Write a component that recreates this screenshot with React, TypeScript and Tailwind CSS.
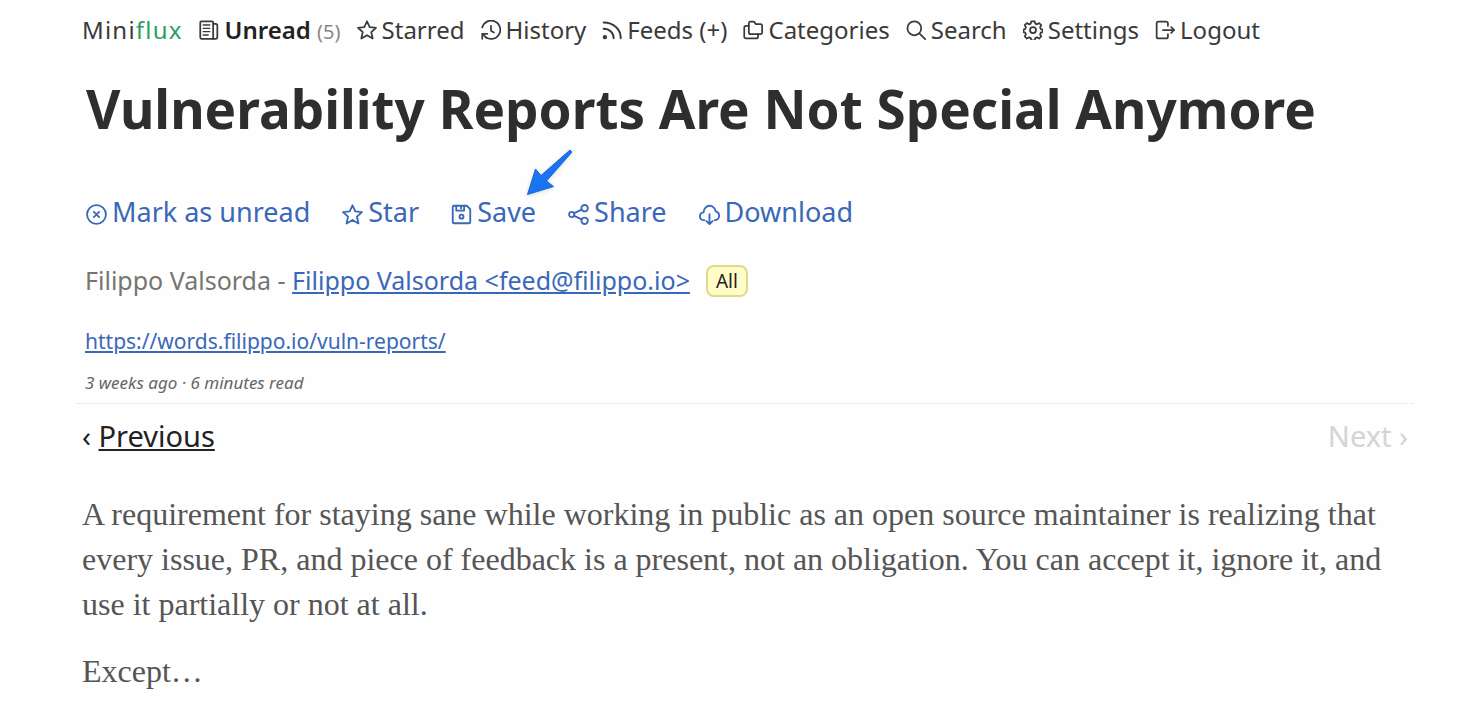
import type { ReactNode } from "react";

function Icon({ children, className }: { children: ReactNode; className: string }) {
  return (
    <svg
      viewBox="0 0 24 24"
      fill="none"
      stroke="currentColor"
      strokeWidth="2.1"
      strokeLinecap="round"
      strokeLinejoin="round"
      aria-hidden="true"
      className={className}
    >
      {children}
    </svg>
  );
}

const icons = {
  news: (
    <>
      <path d="M3 1.500h12.500A1.500 1.500 0 0 1 17 3v19.500H3A1.500 1.500 0 0 1 1.500 21V3A1.500 1.500 0 0 1 3 1.500z" />
      <path d="M17 4.500h3A2 2 0 0 1 22 6.500v14a2 2 0 0 1-2 2h-3" />
      <path d="M5 6h8M5 10h8M5 14h8M5 18h6" strokeWidth="1.6" />
    </>
  ),
  star: <path d="M12 1.500l3.200 7 7.600.8-5.700 5.200 1.700 7.700-6.800-4-6.800 4 1.700-7.700-5.700-5.200 7.600-.8z" />,
  history: (
    <>
      <path d="M1.500 9A11 11 0 1 1 5.500 20.500" />
      <path d="M1.500 22.500v-6h6M1.500 16.500l5 5" />
      <path d="M12 7v6l3.500 2" />
    </>
  ),
  feeds: (
    <>
      <circle cx="3.500" cy="20.500" r="1.600" fill="currentColor" />
      <path d="M2 10.500c7 0 12 5 12 11.500M2 3c12 0 20.500 8 20.500 19" strokeWidth="2.300" />
    </>
  ),
  folders: (
    <>
      <path d="M9 2h4l2.500 3H21a2 2 0 0 1 2 2v8a2 2 0 0 1-2 2H9a2 2 0 0 1-2-2V4a2 2 0 0 1 2-2z" />
      <path d="M18 17v3a2 2 0 0 1-2 2H3.500a2 2 0 0 1-2-2V9a2 2 0 0 1 2-2H7" />
    </>
  ),
  search: (
    <>
      <circle cx="10" cy="10" r="8.300" />
      <path d="M16 16l7 7" />
    </>
  ),
  settings: (
    <>
      <circle cx="12" cy="12" r="3.600" />
      <path d="M10 1.500h4l.7 2.800 2.200.9 2.500-1.500 2.500 2.500-1.400 2.500.9 2.200 2 .6v3l-2 .6-.9 2.200 1.400 2.500-2.500 2.500-2.500-1.500-2.200.9-.7 2.800h-4l-.7-2.800-2.200-.9-2.500 1.500-2.500-2.500 1.400-2.500-.9-2.200-2-.6v-3l2-.6.9-2.200-1.400-2.500 2.500-2.500 2.500 1.500 2.200-.9z" />
    </>
  ),
  logout: (
    <>
      <path d="M15.500 7V4a2 2 0 0 0-2-2H4a2 2 0 0 0-2 2v16a2 2 0 0 0 2 2h9.500a2 2 0 0 0 2-2v-3" />
      <path d="M9.500 12H23M19.500 8.500L23 12l-3.500 3.500" />
    </>
  ),
  circleX: (
    <>
      <circle cx="12" cy="12" r="10.800" />
      <path d="M9 9l6 6M15 9l-6 6" />
    </>
  ),
  floppy: (
    <>
      <path d="M3.500 2H18l4 4v14.500a1.500 1.500 0 0 1-1.500 1.500h-17A1.500 1.500 0 0 1 2 20.500v-17A1.500 1.500 0 0 1 3.500 2z" />
      <path d="M6 2v5.500h9V2M11.500 3v2" />
      <circle cx="12" cy="14.500" r="2.300" />
    </>
  ),
  share: (
    <>
      <circle cx="4.200" cy="12" r="3" />
      <circle cx="19" cy="4.800" r="3.700" />
      <circle cx="19" cy="19.200" r="3.700" />
      <path d="M7.200 10.500l8.300-4M7.200 13.500l8.300 4" />
    </>
  ),
  cloud: (
    <>
      <path d="M6 18.500h-.5C3 18.500 1 16.500 1 14c0-2.300 1.800-4.200 4.200-4.500C5.500 5.200 8.500 2 12 2s6.500 3 7 6.500c2.500.5 4 2.500 4 5 0 2.700-2 5-5 5" />
      <path d="M12 11.500V23M8.500 19.500L12 23l3.500-3.500" />
    </>
  ),
};

const navItems = [
  { label: "Starred", icon: icons.star },
  { label: "History", icon: icons.history },
  { label: "Feeds (+)", icon: icons.feeds },
  { label: "Categories", icon: icons.folders },
  { label: "Search", icon: icons.search },
  { label: "Settings", icon: icons.settings },
  { label: "Logout", icon: icons.logout },
];

const actions = [
  { label: "Mark as unread", icon: icons.circleX },
  { label: "Star", icon: icons.star },
  { label: "Save", icon: icons.floppy, pointed: true },
  { label: "Share", icon: icons.share },
  { label: "Download", icon: icons.cloud },
];

function Arrow() {
  return (
    <svg
      viewBox="0 0 48 50"
      aria-hidden="true"
      className="absolute -top-[46px] right-0 h-[50px] w-12 translate-x-[38px] drop-shadow-sm"
    >
      <path
        d="M45.500 3.500L44 2 15 27.500 9.500 21 1.500 46.500 27.500 38.500 20.500 33 46 4z"
        fill="#1a73f0"
        stroke="#1465cf"
        strokeLinejoin="round"
      />
    </svg>
  );
}

export default function App() {
  return (
    <div className="min-h-screen bg-[#fefefe] pt-3 pr-16 pl-[82px] font-['Noto_Sans',sans-serif] text-[#3a3a3a]">
      <header>
        <nav aria-label="Main" className="flex items-center gap-4 text-2xl leading-9 whitespace-nowrap">
          <a href="#" className="tracking-wider">
            Mini<span className="text-[#2f9e5b]">flux</span>
          </a>
          <a href="#" className="flex items-center gap-1.5">
            <Icon className="size-5">{icons.news}</Icon>
            <span>
              <strong className="font-semibold text-[#222]">Unread</strong>{" "}
              <span className="text-xl text-[#888]">(5)</span>
            </span>
          </a>
          {navItems.map((item) => (
            <a key={item.label} href="#" className="flex items-center gap-[5px]">
              <Icon className="size-5">{item.icon}</Icon>
              {item.label}
            </a>
          ))}
        </nav>
      </header>

      <main>
        <h1 className="mt-6 pl-1 text-[53px] leading-[74px] font-bold text-[#2e2e2e]">
          Vulnerability Reports Are Not Special Anymore
        </h1>

        <div className="mt-12 flex gap-8 pl-1 text-[27px] leading-9 text-[#3968b8]">
          {actions.map((action) => (
            <button key={action.label} type="button" className="relative flex items-center gap-[5px]">
              <Icon className="mt-1 size-[21px]">{action.icon}</Icon>
              {action.label}
              {action.pointed && <Arrow />}
            </button>
          ))}
        </div>

        <div className="mt-8 flex items-center gap-4 pl-[3px] text-[25px] leading-9 text-[#77756f]">
          <span>
            Filippo Valsorda -{" "}
            <a href="#" className="text-[#3968b8] underline">
              Filippo Valsorda &lt;feed@filippo.io&gt;
            </a>
          </span>
          <a
            href="#"
            className="mt-0.5 rounded-lg border-2 border-[#e0d98c] bg-[#fffcc8] px-2 text-[19px] leading-7 text-[#222]"
          >
            All
          </a>
        </div>

        <div className="mt-[25px] pl-[3px] text-[21px] leading-9">
          <a href="https://words.filippo.io/vuln-reports/" className="text-[#3968b8] underline">
            https://words.filippo.io/vuln-reports/
          </a>
        </div>

        <div className="mt-3 pl-[3px] text-[17px] leading-6 text-[#666] italic">
          <time>3 weeks ago</time> · <span>6 minutes read</span>
        </div>

        <nav
          aria-label="Entries"
          className="-mx-1.5 mt-2 flex justify-between border-t border-dotted border-[#ddd] px-1.5 pt-3 text-[29px] leading-10"
        >
          <span className="text-[#222]">
            ‹{" "}
            <a href="#" className="underline">
              Previous
            </a>
          </span>
          <span className="text-[#d4d4d4]">Next ›</span>
        </nav>

        <article className="mt-9 space-y-[22px] font-['Liberation_Serif',serif] text-[32px] leading-[45px] text-[#555]">
          <p>
            A requirement for staying sane while working in public as an open source maintainer is
            realizing that every issue, PR, and piece of feedback is a present, not an obligation. You
            can accept it, ignore it, and use it partially or not at all.
          </p>
          <p>Except…</p>
        </article>
      </main>
    </div>
  );
}
